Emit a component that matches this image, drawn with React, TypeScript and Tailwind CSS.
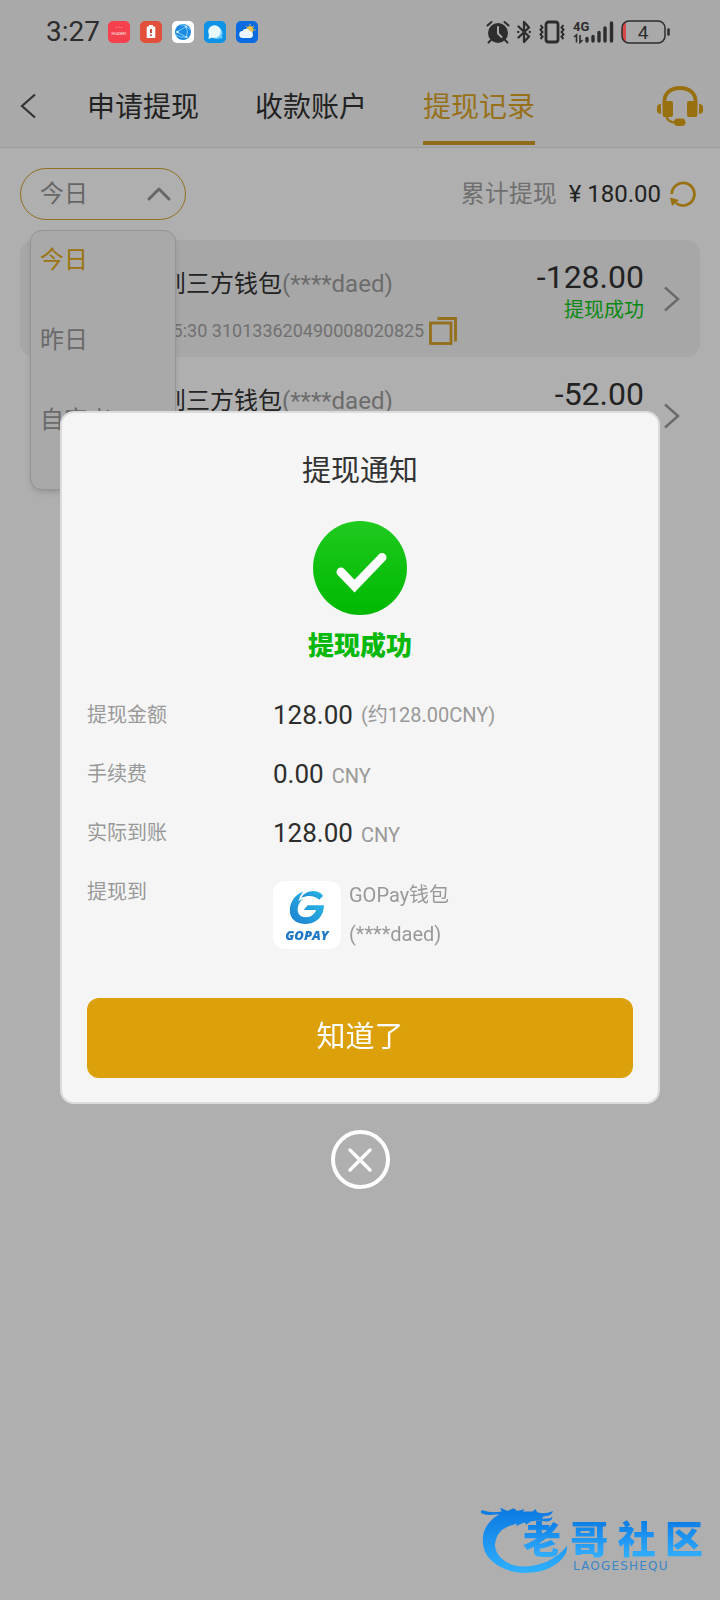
import React, { useState } from "react"
import { ChevronUp, Wallet, X } from "lucide-react"

const TABS = ["申请提现", "收款账户", "提现记录"]
const RANGES = ["今日", "昨日", "自定义"]

const RECORDS = [
  { id: "310133620490008020825", time: "09-23 15:25:30", account: "(****daed)", amount: "-128.00", highlighted: true },
  { id: "310133620490008020817", time: "09-23 15:02:11", account: "(****daed)", amount: "-52.00", highlighted: false },
]

function AppIcons() {
  return (
    <div className="flex gap-[10px]">
      <svg viewBox="0 0 22 22" className="h-[22px] w-[22px]">
        <rect width="22" height="22" rx="5" fill="#f5404d" />
        <path d="M8 6l1 1M11 5.500v1.200M14 6l-1 1" stroke="#fff" strokeWidth=".7" opacity=".7" />
        <text x="11" y="14" textAnchor="middle" fontSize="4" fontWeight="500" fill="#ffd9dc" fontFamily="Roboto">HUAWEI</text>
      </svg>
      <svg viewBox="0 0 22 22" className="h-[22px] w-[22px]">
        <rect width="22" height="22" rx="5" fill="#e2503c" />
        <path d="M9 4h4v1.500h1.500a.8.8 0 0 1 .8.800v10a.8.8 0 0 1-.8.800h-7a.8.8 0 0 1-.8-.800v-10a.8.8 0 0 1 .8-.800H9z" fill="#fff" />
        <path d="M11 8v4M11 13.500v1.500" stroke="#c23a28" strokeWidth="1.800" />
      </svg>
      <svg viewBox="0 0 22 22" className="h-[22px] w-[22px]">
        <rect width="22" height="22" rx="5" fill="#fff" />
        <circle cx="11" cy="11" r="8" fill="#1d8ae0" />
        <path d="M5 11L14 5.500M5 11l9.500 5M14 5.500q2.500 5 .5 10.500M4 14q4 3 10.500 2M8 4q5-.5 6 1.500l4 3" stroke="#8fe0ff" strokeWidth=".8" fill="none" />
        <circle cx="5.500" cy="11" r="1.300" fill="#d8f4ff" />
        <circle cx="14" cy="5.500" r="1" fill="#d8f4ff" />
        <circle cx="14.500" cy="16" r="1" fill="#d8f4ff" />
      </svg>
      <svg viewBox="0 0 22 22" className="h-[22px] w-[22px]">
        <rect width="22" height="22" rx="5" fill="#0e93e6" />
        <path d="M13 17a5 5 0 0 0 5-4l.3 4.500z" fill="#6fd0ff" />
        <circle cx="12.500" cy="12" r="6" fill="#6fd0ff" />
        <circle cx="10.500" cy="10.500" r="6.300" fill="#e6f9ff" />
        <path d="M5 13l-.5 5 5-2z" fill="#e6f9ff" />
      </svg>
      <svg viewBox="0 0 22 22" className="h-[22px] w-[22px]">
        <rect width="22" height="22" rx="5" fill="#0b6be0" />
        <circle cx="14" cy="8.500" r="3.500" fill="#e9c04a" />
        <path d="M14 3v1.500M18 5l-1 1M19.500 9H18M10 5l1 1" stroke="#e9c04a" strokeWidth="1" />
        <path d="M7 17a3.500 3.500 0 0 1-.5-7 4 4 0 0 1 7.300 0 3.600 3.600 0 0 1 .7 7z" fill="#eef6ff" />
      </svg>
    </div>
  )
}

function StatusIcons() {
  return (
    <div className="flex items-center gap-[7px] text-[#2d2d2d]">
      <svg viewBox="0 0 24 24" className="h-6 w-6">
        <circle cx="12" cy="13" r="10" fill="currentColor" />
        <path d="M1.500 5.500L5.500 2M22.500 5.500L18.500 2M5 20l-2.500 2.500M19 20l2.500 2.500" stroke="currentColor" strokeWidth="2" strokeLinecap="round" />
        <path d="M12 7v6.500l3.500 3.500" fill="none" stroke="#a9a9a9" strokeWidth="2" strokeLinecap="round" />
      </svg>
      <svg viewBox="0 0 14 24" className="h-6 w-[14px]" fill="none" stroke="currentColor" strokeWidth="2.300" strokeLinejoin="round" strokeLinecap="round">
        <path d="M1.500 6.500l10.500 10L7 22V2l5 5.500-10.500 10" />
        <path d="M1.200 12h.1M12.700 12h.1" />
      </svg>
      <svg viewBox="0 0 28 24" className="h-6 w-7" fill="none" stroke="currentColor">
        <rect x="8" y="2" width="12" height="20" rx="2.500" strokeWidth="2.800" />
        <path d="M2.500 5l2 2.500-2 2.300 2 2.300-2 2.300 2 2.300-2 2.300M25.500 5l-2 2.500 2 2.300-2 2.300 2 2.300-2 2.300 2 2.300" strokeWidth="2" />
      </svg>
      <svg viewBox="0 0 41 24" className="h-6 w-[41px]" fill="none" stroke="currentColor">
        <text x="0" y="11" fontSize="13" fontWeight="700" fontFamily="Roboto" fill="currentColor" stroke="none">4G</text>
        <path d="M1 17l2.500-2v7.500M7 15v7.500l2.500-2.500" strokeWidth="1.600" />
        <path d="M14 18.500v2.500M20 16.500v4.500M26 12.500v8.500M32 8v13M38.500 3v18" strokeWidth="3.400" strokeLinecap="round" />
      </svg>
      <svg viewBox="0 0 50 24" className="h-6 w-[50px]">
        <path d="M5 1.500v21a8 8 0 0 1-4-6V8a8 8 0 0 1 4-6.500z" fill="#d8494c" />
        <rect x="1" y="1" width="43" height="22" rx="7" fill="none" stroke="currentColor" strokeWidth="1.500" />
        <path d="M47.500 9.500v5" stroke="currentColor" strokeWidth="2.500" strokeLinecap="round" />
        <text x="22" y="19" textAnchor="middle" fontSize="19" fontFamily="Roboto" fill="currentColor">4</text>
      </svg>
    </div>
  )
}

function HeadsetIcon() {
  return (
    <svg viewBox="0 0 46 42" className="h-[42px] w-[46px]" fill="#99700f">
      <path d="M7.500 20v-4C7.500 8 14 3 23 3s15.500 5 15.500 13v4" fill="none" stroke="#99700f" strokeWidth="3.800" />
      <rect x="5.600" y="16" width="10.400" height="16" rx="2" />
      <rect x="30" y="16" width="10.400" height="16" rx="2" />
      <path d="M4 19v10a5 5 0 0 1 0-10zM42 19v10a5 5 0 0 0 0-10z" />
      <path d="M9.500 31q.5 6 9 6.500" fill="none" stroke="#99700f" strokeWidth="2.400" />
      <rect x="17" y="33.500" width="11.500" height="7.500" rx="3.700" />
    </svg>
  )
}

function GopayLogo() {
  return (
    <div className="flex h-[68px] w-[68px] flex-col items-center rounded-xl bg-white pt-[9px]">
      <svg viewBox="50 24 110 106" className="h-[35px] w-9">
        <defs>
          <linearGradient id="gopay" x1="0" y1="1" x2="1" y2="0">
            <stop offset="0" stopColor="#1d7fd0" />
            <stop offset="1" stopColor="#29c0e8" />
          </linearGradient>
        </defs>
        <g fill="url(#gopay)">
          <path d="M94 28C60 40 48 74 54 98c6 22 28 32 54 29 28-4 48-24 49-57h-50L95 85h38c-5 14-17 22-32 22-18 0-27-13-24-30 2-12 8-20 17-27L79 57q5-18 15-29z" />
          <path d="M88 47C98 24 140 18 154 42l-12 11c-14-13-34-14-54-6z" />
        </g>
      </svg>
      <span className="font-['Open_Sans'] text-[13px] leading-[20px] font-extrabold text-[#1f78c4] italic">GOPAY</span>
    </div>
  )
}

function RecordCard({ record }: { record: (typeof RECORDS)[number] }) {
  return (
    <li className={`flex items-center rounded-[14px] pr-5 pl-[68px] ${record.highlighted ? "bg-[#a7a7a7]" : ""}`}>
      <div className="flex-1 pt-7 pb-3">
        <div className="flex items-center gap-1 text-2xl leading-8 text-[#222]">
          <Wallet className="h-[22px] w-[22px]" />
          <p>
            提现到三方钱包<span className="text-[#6c6c6c]">{record.account}</span>
          </p>
        </div>
        <div className="mt-[17px] flex items-center gap-[5px] text-lg leading-7 text-[#707070]">
          <span>
            {record.time} {record.id}
          </span>
          <button aria-label="复制单号">
            <svg viewBox="0 0 28 28" className="h-7 w-7" fill="none" stroke="#94701d" strokeWidth="2.800">
              <rect x="1.500" y="6" width="20.500" height="20.500" />
              <path d="M8.500 1.500h18V24.500" />
            </svg>
          </button>
        </div>
      </div>
      <div className="self-start pt-[19px] text-right">
        <p className="text-[32px] leading-9 text-[#222]">{record.amount}</p>
        <p className="mt-[3px] text-xl leading-6 text-[#0a8a12]">提现成功</p>
      </div>
      <svg viewBox="0 0 16 26" className="ml-5 h-[26px] w-4" fill="none" stroke="#6a6a6a" strokeWidth="2.400">
        <path d="M1 1.500L14 13 1 24.500" />
      </svg>
    </li>
  )
}

function CommunityMark() {
  return (
    <div className="absolute right-[17px] bottom-[25px] flex items-start">
      <svg viewBox="62 42 272 212" className="h-[70px] w-[90px]">
        <defs>
          <linearGradient id="dragon" x1="0" y1="0" x2="0" y2="1">
            <stop offset="0" stopColor="#0a78e0" />
            <stop offset="1" stopColor="#2fb0ff" />
          </linearGradient>
        </defs>
        <g fill="url(#dragon)">
          <path d="M66 58q26 9 58 4l-4-12 22 10 18-8 12 8 22-6-6 8 30 0 8-8 6 10q22 8 48-4-4 16-28 16l-6 8 26-2 6-6q0 16-20 16l-22-4-24 4-14 10-4-8-26 12 2-8-28 10q-34 14-38 54c0 36 36 64 84 66 50 0 100-18 134-62 4 26-22 54-60 70-62 24-146 12-184-44-20-38-16-92 40-122l-32 2q-18 0-30-10z" />
        </g>
      </svg>
      <div className="-ml-[48px] w-[180px] pt-[15px]">
        <div className="flex justify-between bg-linear-to-b from-[#0a7ce6] to-[#35b2ff] bg-clip-text text-[38px] leading-10 font-black text-transparent">
          <span>老</span>
          <span>哥</span>
          <span>社</span>
          <span>区</span>
        </div>
        <p className="pl-[50px] font-['DejaVu_Sans'] text-xs leading-3 tracking-widest text-[#3a86c8]">LAOGESHEQU</p>
      </div>
    </div>
  )
}

export default function App() {
  const [tab, setTab] = useState("提现记录")
  const [range, setRange] = useState("今日")
  const [menuOpen, setMenuOpen] = useState(true)
  const [noticeOpen, setNoticeOpen] = useState(true)

  return (
    <div className="relative min-h-screen bg-[#afafaf] font-[Roboto,'Noto_Sans_CJK_SC',sans-serif]">
      <header className="border-b border-[#9d9d9d] bg-[#a9a9a9]">
        <div className="flex h-16 items-center pr-[49px] pl-[46px]">
          <span className="mr-2 text-[28px] leading-9 text-[#2d2d2d]">3:27</span>
          <AppIcons />
          <div className="ml-auto">
            <StatusIcons />
          </div>
        </div>
        <div className="flex h-[83px] items-center pr-[17px] pl-5">
          <button aria-label="返回" className="w-[67px]">
            <svg viewBox="0 0 16 26" className="h-[26px] w-4" fill="none" stroke="#333" strokeWidth="2.200">
              <path d="M15 1.500L2 13l13 11.500" />
            </svg>
          </button>
          <nav className="flex gap-14 self-stretch">
            {TABS.map((t) => (
              <button
                key={t}
                onClick={() => setTab(t)}
                className={`relative pt-1 text-[28px] ${t === tab ? "text-[#97711a]" : "text-[#222]"}`}
              >
                {t}
                {t === tab && <span className="absolute inset-x-0 bottom-[2px] h-1 bg-[#926c1c]" />}
              </button>
            ))}
          </nav>
          <button aria-label="客服" className="ml-auto">
            <HeadsetIcon />
          </button>
        </div>
      </header>

      <main className="px-5">
        <div className="flex h-[92px] items-center justify-between pr-1">
          <div className="relative">
            <button
              aria-haspopup="listbox"
              aria-expanded={menuOpen}
              onClick={() => setMenuOpen((v) => !v)}
              className="flex h-[52px] w-[166px] items-center justify-between rounded-full border border-[#927021] pr-[6px] pl-[19px] text-2xl text-[#666]"
            >
              {range}
              <ChevronUp className="h-10 w-10" strokeWidth={1.7} />
            </button>
            {menuOpen && (
              <ul
                role="listbox"
                aria-label="时间范围"
                className="absolute top-[62px] left-[10px] z-10 h-[260px] w-[146px] rounded-xl border border-[#949494] bg-[#a9a9a9] pt-[13px] pl-[9px] shadow-md"
              >
                {RANGES.map((r) => (
                  <li key={r} role="option" aria-selected={r === range} className="h-20">
                    <button
                      onClick={() => setRange(r)}
                      className={`text-2xl leading-8 ${r === range ? "text-[#9b7310]" : "text-[#6a6a6a]"}`}
                    >
                      {r}
                    </button>
                  </li>
                ))}
              </ul>
            )}
          </div>
          <div className="flex items-center text-2xl">
            <span className="mr-3 text-[#707070]">累计提现</span>
            <span className="mr-[9px] text-[#222]">¥ 180.00</span>
            <button aria-label="刷新">
              <svg viewBox="0 0 26 26" className="h-[26px] w-[26px]">
                <path d="M1.800 13A11.300 11.300 0 1 1 6 22" fill="none" stroke="#9a7111" strokeWidth="2.800" />
                <path d="M0 16.500l9 2.500-7 6z" fill="#9a7111" />
              </svg>
            </button>
          </div>
        </div>

        <ul>
          {RECORDS.map((r) => (
            <RecordCard key={r.id} record={r} />
          ))}
        </ul>
      </main>

      <CommunityMark />

      {noticeOpen && (
        <div className="fixed inset-0 z-20 flex flex-col items-center justify-center gap-[26px] px-[60px]">
          <div role="dialog" aria-labelledby="notice-title" className="w-full rounded-[14px] border-2 border-[#dcdcdc] bg-[#f5f5f5] px-[25px] pt-[38px] pb-6">
            <h2 id="notice-title" className="text-center text-[29px] leading-10 text-[#333]">
              提现通知
            </h2>
            <svg viewBox="0 0 94 94" className="mx-auto mt-[30px] h-[94px] w-[94px]">
              <defs>
                <linearGradient id="success" x1="0" y1="0" x2="0" y2="1">
                  <stop offset="0" stopColor="#1fca1f" />
                  <stop offset="1" stopColor="#00b800" />
                </linearGradient>
              </defs>
              <circle cx="47" cy="47" r="47" fill="url(#success)" />
              <path d="M28 51l13.500 14L69 36.500" fill="none" stroke="#fff" strokeWidth="9" strokeLinecap="round" />
            </svg>
            <p className="mt-[15px] text-center text-[26px] leading-8 font-black text-[#06b80a]">提现成功</p>

            <dl className="mt-6 grid grid-cols-[186px_1fr] grid-rows-[59px_59px_59px_auto] text-xl leading-[59px] text-[#999]">
              <dt>提现金额</dt>
              <dd className="flex items-center gap-2">
                <span className="text-[26px] text-[#2d2d2d]">128.00</span>(约128.00CNY)
              </dd>
              <dt>手续费</dt>
              <dd className="flex items-baseline gap-2">
                <span className="text-[26px] text-[#2d2d2d]">0.00</span>CNY
              </dd>
              <dt>实际到账</dt>
              <dd className="flex items-baseline gap-2">
                <span className="text-[26px] text-[#2d2d2d]">128.00</span>CNY
              </dd>
              <dt>提现到</dt>
              <dd className="flex items-center gap-2 pt-[13px]">
                <GopayLogo />
                <div className="leading-[39px]">
                  <p>GOPay钱包</p>
                  <p>(****daed)</p>
                </div>
              </dd>
            </dl>

            <button onClick={() => setNoticeOpen(false)} className="mt-11 h-20 w-full rounded-xl bg-[#dca00b] text-[29px] text-white">
              知道了
            </button>
          </div>
          <button
            aria-label="关闭"
            onClick={() => setNoticeOpen(false)}
            className="grid h-[59px] w-[59px] place-items-center rounded-full border-4 border-white text-white"
          >
            <X className="h-10 w-10" strokeWidth={2} />
          </button>
        </div>
      )}
    </div>
  )
}
